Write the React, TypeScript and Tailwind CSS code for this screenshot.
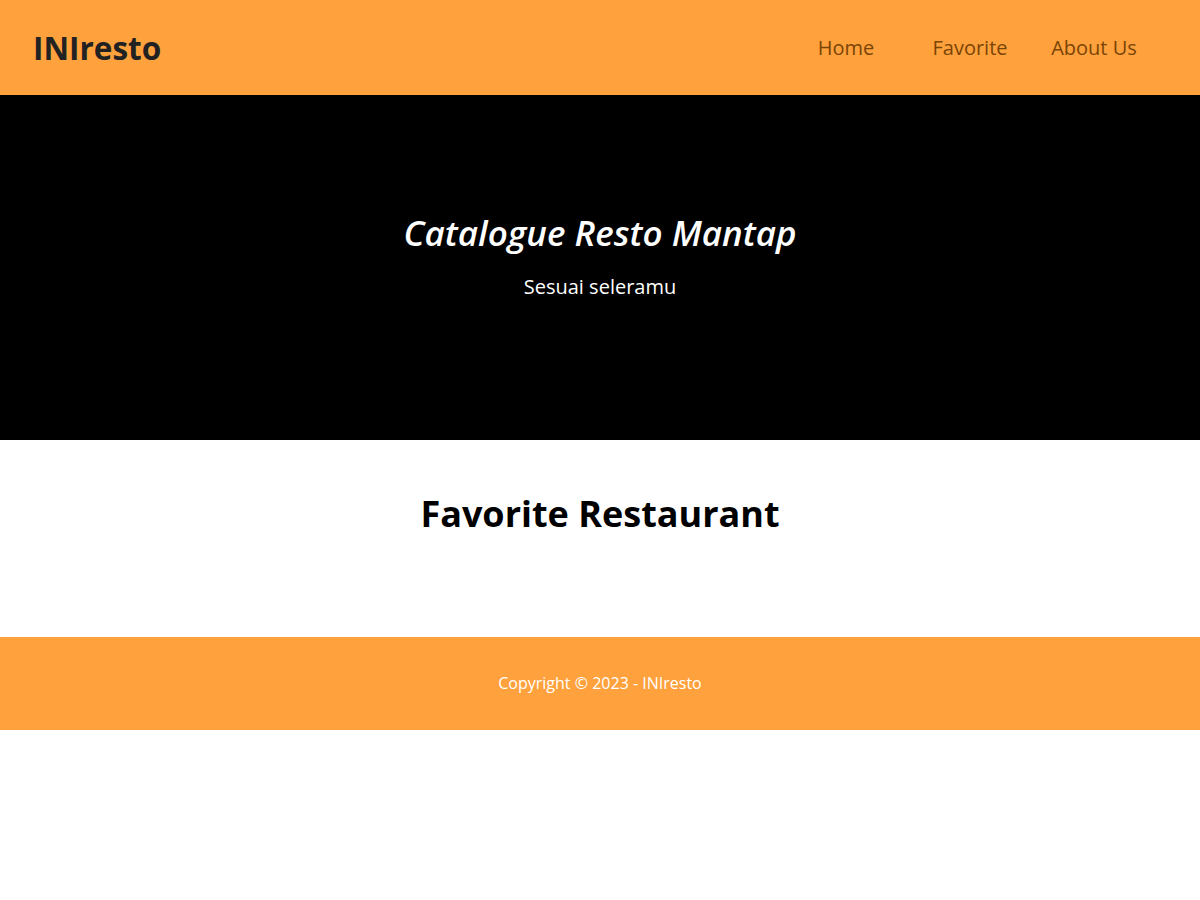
export default function App() {
  return (
    <div className="w-full font-['Open_Sans',sans-serif]">
      <header className="h-[95px] bg-[#ffa13c] flex items-center justify-between pl-[33px] pr-[44px]">
        <div className="text-[31.5px] font-bold text-[#222222]">INIresto</div>
        <nav className="flex">
          {["Home", "Favorite", "About Us"].map((item) => (
            <a key={item} href="#" className="w-[124px] text-center text-[20px] text-[#7a4406]">
              {item}
            </a>
          ))}
        </nav>
      </header>
      <section className="h-[345px] bg-black flex flex-col items-center justify-center pb-[22px]">
        <h1 className="text-[35px] font-semibold italic text-white leading-tight">
          Catalogue Resto Mantap
        </h1>
        <p className="mt-[18px] text-[20px] text-white">Sesuai seleramu</p>
      </section>
      <main className="h-[197px] bg-white flex justify-center pt-[51px]">
        <h2 className="text-[36px] font-bold text-black leading-tight">Favorite Restaurant</h2>
      </main>
      <footer className="h-[93px] bg-[#ffa13c] flex items-center justify-center pb-[2px]">
        <p className="text-[16px] font-medium text-white">Copyright © 2023 - INIresto</p>
      </footer>
    </div>
  );
}
